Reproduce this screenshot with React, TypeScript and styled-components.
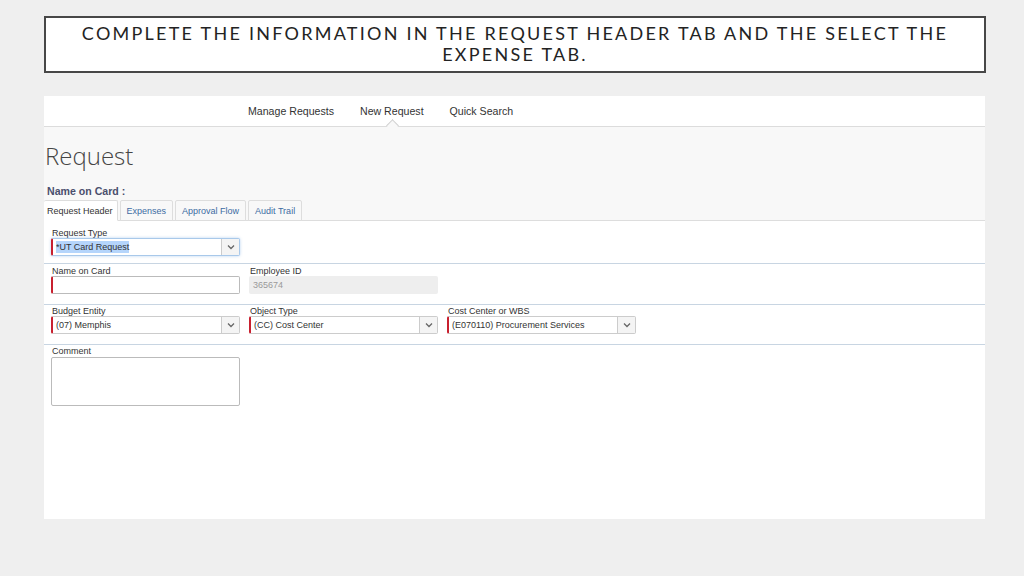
import React from 'react'
import styled, { createGlobalStyle } from 'styled-components'

const GlobalStyle = createGlobalStyle`
  html, body {
    margin: 0;
    padding: 0;
    background: #efefef;
  }
  * {
    box-sizing: border-box;
  }
`

const Page = styled.div`
  width: 1024px;
  height: 576px;
  padding: 16px 38px 0 44px;
  display: flex;
  flex-direction: column;
  font-family: 'Liberation Sans', Arial, sans-serif;
`

const TitleBox = styled.div`
  width: 942px;
  height: 57px;
  border: 2px solid #474747;
  background: #ffffff;
  display: flex;
  align-items: center;
  justify-content: center;
  text-align: center;
  padding-bottom: 1px;
  font-family: Lato, 'Open Sans', sans-serif;
  font-size: 18px;
  line-height: 21px;
  letter-spacing: 2.25px;
  color: #232323;
  text-transform: uppercase;
`

const Panel = styled.div`
  margin-top: 23px;
  width: 941px;
  height: 423px;
  background: #ffffff;
  display: flex;
  flex-direction: column;
`

const NavBar = styled.div`
  height: 31px;
  flex: none;
  background: #ffffff;
  border-bottom: 1px solid #dcdcdc;
  display: flex;
  align-items: center;
  gap: 26px;
  padding: 0 0 1px 204px;
`

const NavItem = styled.div<{ active?: boolean }>`
  position: relative;
  font-size: 10.6px;
  color: #333333;
  height: 100%;
  display: flex;
  align-items: center;
  &::after {
    content: '';
    display: ${p => (p.active ? 'block' : 'none')};
    position: absolute;
    left: 50%;
    bottom: -5px;
    width: 8px;
    height: 8px;
    margin-left: -4px;
    background: #f8f8f8;
    border-left: 1px solid #cfcfcf;
    border-top: 1px solid #cfcfcf;
    transform: rotate(45deg);
  }
`

const HeaderArea = styled.div`
  background: #f8f8f8;
  height: 94px;
  flex: none;
  display: flex;
  flex-direction: column;
  border-bottom: 1px solid #dddddd;
`

const Heading = styled.h1`
  margin: 13px 0 0 1px;
  font-family: 'Open Sans', sans-serif;
  font-weight: 300;
  font-size: 24px;
  line-height: 32px;
  color: #454545;
`

const CardName = styled.div`
  margin: 13px 0 0 3px;
  font-size: 10.6px;
  font-weight: bold;
  line-height: 13px;
  color: #4a4f6d;
`

const Tabs = styled.div`
  display: flex;
  gap: 2px;
  margin-top: auto;
  margin-bottom: -1px;
`

const Tab = styled.div<{ active?: boolean }>`
  height: 21px;
  padding: 0 6px;
  display: flex;
  align-items: center;
  font-size: 9px;
  color: ${p => (p.active ? '#333333' : '#3d6ca3')};
  background: ${p => (p.active ? '#ffffff' : '#f8f8f8')};
  border: 1px solid #dddddd;
  border-bottom-color: ${p => (p.active ? '#ffffff' : '#dddddd')};
  border-radius: 2px 2px 0 0;
  &:first-child {
    border-left: none;
    padding: 0 4px 0 3px;
  }
`

const Form = styled.div`
  flex: 1;
  background: #ffffff;
  display: flex;
  flex-direction: column;
`

const Row = styled.div<{ top?: number; bottom?: number; last?: boolean }>`
  display: grid;
  grid-template-columns: repeat(3, 189px);
  column-gap: 9px;
  padding: ${p => p.top ?? 1}px 7px ${p => p.bottom ?? 10}px;
  border-bottom: ${p => (p.last ? 'none' : '1px solid #c8d5e2')};
`

const Field = styled.div`
  display: flex;
  flex-direction: column;
`

const Label = styled.div`
  font-size: 9px;
  line-height: 10px;
  color: #333333;
  padding-left: 1px;
`

const SelectBox = styled.div<{ focused?: boolean }>`
  height: 18px;
  display: flex;
  background: #ffffff;
  border: 1px solid ${p => (p.focused ? '#a9c9ea' : '#cccccc')};
  border-left: 2px solid #c8202f;
  border-radius: 2px;
  box-shadow: ${p => (p.focused ? '0 0 3px rgba(90, 150, 220, 0.45)' : 'none')};
`

const SelectValue = styled.div`
  flex: 1;
  display: flex;
  align-items: center;
  padding-left: 3px;
  font-size: 9px;
  color: #333333;
`

const Highlight = styled.span`
  background: #b5d5fb;
  padding: 1px 0;
`

const ArrowButton = styled.div`
  width: 18px;
  flex: none;
  display: flex;
  align-items: center;
  justify-content: center;
  background: #f4f4f4;
  border-left: 1px solid #cccccc;
`

const TextInput = styled.div`
  height: 18px;
  background: #ffffff;
  border: 1px solid #bbbbbb;
  border-left: 2px solid #c8202f;
  border-radius: 2px;
`

const ReadOnly = styled.div`
  height: 18px;
  background: #eeeeee;
  border-radius: 2px;
  display: flex;
  align-items: center;
  padding-left: 4px;
  font-size: 9px;
  color: #9a9a9a;
`

const TextArea = styled.div`
  height: 49px;
  margin-top: 1px;
  border: 1px solid #bbbbbb;
  border-radius: 2px;
  background: #ffffff;
`

function Chevron() {
  return (
    <svg width="8" height="6" viewBox="0 0 8 6">
      <polyline points="1,1.5 4,4.5 7,1.5" fill="none" stroke="#666666" strokeWidth="1.3" />
    </svg>
  )
}

function Select({ value, focused }: { value: React.ReactNode; focused?: boolean }) {
  return (
    <SelectBox focused={focused}>
      <SelectValue>{value}</SelectValue>
      <ArrowButton>
        <Chevron />
      </ArrowButton>
    </SelectBox>
  )
}

export default function App() {
  return (
    <>
      <GlobalStyle />
      <Page>
        <TitleBox>
          Complete the information in the request header tab and the select the
          <br />
          expense tab.
        </TitleBox>
        <Panel>
          <NavBar>
            <NavItem>Manage Requests</NavItem>
            <NavItem active>New Request</NavItem>
            <NavItem>Quick Search</NavItem>
          </NavBar>
          <HeaderArea>
            <Heading>Request</Heading>
            <CardName>Name on Card :</CardName>
            <Tabs>
              <Tab active>Request Header</Tab>
              <Tab>Expenses</Tab>
              <Tab>Approval Flow</Tab>
              <Tab>Audit Trail</Tab>
            </Tabs>
          </HeaderArea>
          <Form>
            <Row top={7} bottom={7}>
              <Field>
                <Label>Request Type</Label>
                <Select focused value={<Highlight>*UT Card Request</Highlight>} />
              </Field>
            </Row>
            <Row top={2}>
              <Field>
                <Label>Name on Card</Label>
                <TextInput />
              </Field>
              <Field>
                <Label>Employee ID</Label>
                <ReadOnly>365674</ReadOnly>
              </Field>
            </Row>
            <Row top={1}>
              <Field>
                <Label>Budget Entity</Label>
                <Select value="(07) Memphis" />
              </Field>
              <Field>
                <Label>Object Type</Label>
                <Select value="(CC) Cost Center" />
              </Field>
              <Field>
                <Label>Cost Center or WBS</Label>
                <Select value="(E070110) Procurement Services" />
              </Field>
            </Row>
            <Row top={1} last>
              <Field>
                <Label>Comment</Label>
                <TextArea />
              </Field>
            </Row>
          </Form>
        </Panel>
      </Page>
    </>
  )
}
